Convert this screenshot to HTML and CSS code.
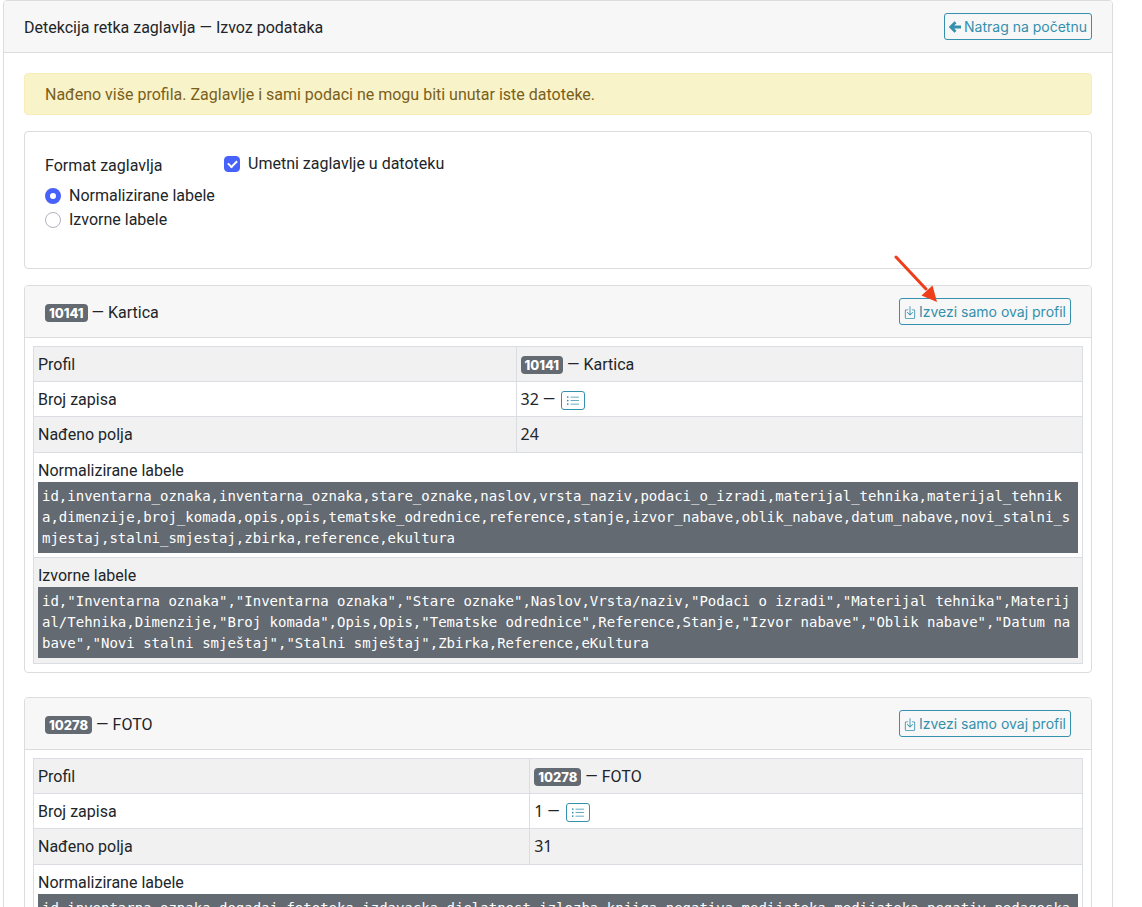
FILE: index.html
```html
<!DOCTYPE html>
<html lang="hr">
<head>
<meta charset="utf-8">
<title>Izvoz podataka</title>
<link rel="stylesheet" href="styles.css">
</head>
<body>
<svg class="symbols" aria-hidden="true">
  <symbol id="list" viewBox="0 0 16 16"><path fill-rule="evenodd" d="M5 11.5a.5.5 0 0 1 .5-.5h9a.5.5 0 0 1 0 1h-9a.5.5 0 0 1-.5-.5zm0-4a.5.5 0 0 1 .5-.5h9a.5.5 0 0 1 0 1h-9a.5.5 0 0 1-.5-.5zm0-4a.5.5 0 0 1 .5-.5h9a.5.5 0 0 1 0 1h-9a.5.5 0 0 1-.5-.5zm-3 1a1 1 0 1 0 0-2 1 1 0 0 0 0 2zm0 4a1 1 0 1 0 0-2 1 1 0 0 0 0 2zm0 4a1 1 0 1 0 0-2 1 1 0 0 0 0 2z"/></symbol>
  <symbol id="download" viewBox="1 0 14 16"><path fill-rule="evenodd" d="M3.5 6a.5.5 0 0 0-.5.5v8a.5.5 0 0 0 .5.5h9a.5.5 0 0 0 .5-.5v-8a.5.5 0 0 0-.5-.5h-2a.5.5 0 0 1 0-1h2A1.500 1.500 0 0 1 14 6.500v8a1.500 1.500 0 0 1-1.500 1.500h-9A1.500 1.500 0 0 1 2 14.500v-8A1.500 1.500 0 0 1 3.500 5h2a.5.5 0 0 1 0 1h-2z"/><path fill-rule="evenodd" d="M7.646 11.854a.5.5 0 0 0 .708 0l3-3a.5.5 0 0 0-.708-.708L8.500 10.293V1.500a.5.5 0 0 0-1 0v8.793L5.354 8.146a.5.5 0 1 0-.708.708l3 3z"/></symbol>
</svg>
<main class="card page">
  <header class="card-header">
    <h1 class="title">Detekcija retka zaglavlja — Izvoz podataka</h1>
    <a class="btn" href="#"><svg class="icon" viewBox="0 0 12 14" aria-hidden="true"><path d="M6.500 2.200 1.700 7l4.800 4.800M2 7h10" fill="none" stroke="currentColor" stroke-width="2.800"/></svg>Natrag na početnu</a>
  </header>
  <div class="page-body">
    <div class="alert" role="alert">Nađeno više profila. Zaglavlje i sami podaci ne mogu biti unutar iste datoteke.</div>
    <form class="card options">
      <fieldset class="group">
        <legend class="legend">Format zaglavlja</legend>
        <label class="choice"><input class="radio" type="radio" name="format" checked>Normalizirane labele</label>
        <label class="choice"><input class="radio" type="radio" name="format">Izvorne labele</label>
      </fieldset>
      <label class="choice"><input class="check" type="checkbox" checked>Umetni zaglavlje u datoteku</label>
    </form>

    <section class="card profile">
      <header class="card-header">
        <h2 class="title"><span class="badge">10141</span> — Kartica</h2>
        <button class="btn" type="button"><svg class="icon" aria-hidden="true"><use href="#download"/></svg>Izvezi samo ovaj profil</button>
        <svg class="pointer" viewBox="0 0 44 48" aria-hidden="true"><path d="M2 2 32 34" stroke="#ee3d1b" stroke-width="3" stroke-linecap="round"/><path d="M43 47 27.500 40.500 38.500 30.500z" fill="#ee3d1b"/></svg>
      </header>
      <div class="profile-body">
        <table class="table">
          <colgroup><col class="first"><col></colgroup>
          <tr><td>Profil</td><td><span class="badge">10141</span> — Kartica</td></tr>
          <tr><td>Broj zapisa</td><td><span class="num">32</span> — <button class="mini" type="button" aria-label="Popis zapisa"><svg class="mini-icon" aria-hidden="true"><use href="#list"/></svg></button></td></tr>
          <tr class="count"><td>Nađeno polja</td><td><span class="num">24</span></td></tr>
          <tr><td colspan="2">Normalizirane labele<pre class="code">id,inventarna_oznaka,inventarna_oznaka,stare_oznake,naslov,vrsta_naziv,podaci_o_izradi,materijal_tehnika,materijal_tehnika,dimenzije,broj_komada,opis,opis,tematske_odrednice,reference,stanje,izvor_nabave,oblik_nabave,datum_nabave,novi_stalni_smjestaj,stalni_smjestaj,zbirka,reference,ekultura</pre></td></tr>
          <tr class="last"><td colspan="2">Izvorne labele<pre class="code">id,"Inventarna oznaka","Inventarna oznaka","Stare oznake",Naslov,Vrsta/naziv,"Podaci o izradi","Materijal tehnika",Materijal/Tehnika,Dimenzije,"Broj komada",Opis,Opis,"Tematske odrednice",Reference,Stanje,"Izvor nabave","Oblik nabave","Datum nabave","Novi stalni smještaj","Stalni smještaj",Zbirka,Reference,eKultura</pre></td></tr>
        </table>
      </div>
    </section>

    <section class="card profile">
      <header class="card-header">
        <h2 class="title"><span class="badge">10278</span> — FOTO</h2>
        <button class="btn" type="button"><svg class="icon" aria-hidden="true"><use href="#download"/></svg>Izvezi samo ovaj profil</button>
      </header>
      <div class="profile-body">
        <table class="table">
          <colgroup><col class="first-wide"><col></colgroup>
          <tr><td>Profil</td><td><span class="badge">10278</span> — FOTO</td></tr>
          <tr><td>Broj zapisa</td><td><span class="num">1</span> — <button class="mini" type="button" aria-label="Popis zapisa"><svg class="mini-icon" aria-hidden="true"><use href="#list"/></svg></button></td></tr>
          <tr class="count"><td>Nađeno polja</td><td><span class="num">31</span></td></tr>
          <tr><td colspan="2">Normalizirane labele<pre class="code">id,inventarna_oznaka,dogadaj,fototeka,izdavacka_djelatnost,izlozba,knjiga_negativa,medijateka,medijateka_negativ,pedagoska</pre></td></tr>
        </table>
      </div>
    </section>
  </div>
</main>
</body>
</html>
```
FILE: styles.css
```css
* { box-sizing: border-box; }
html { height: 100%; overflow: hidden; }
body {
  margin: 0 29px 0 3px;
  height: 100%;
  overflow: hidden;
  background: #fff;
  color: #212529;
  font: 16px/24px Roboto, "Liberation Sans", sans-serif;
}
.symbols { display: none; }
.card { border: 1px solid #dcdcdd; border-radius: 4px; background: #fff; }
.card-header {
  position: relative;
  display: flex;
  align-items: center;
  justify-content: space-between;
  height: 52px;
  padding: 0 20px;
  background: #f7f7f7;
  border-bottom: 1px solid #dcdcdd;
  border-radius: 3px 3px 0 0;
}
.title { margin: 0; padding-top: 2px; font-size: 16px; font-weight: 400; }
.page-body { padding: 20px; }
.btn {
  display: inline-flex;
  align-items: center;
  gap: 3px;
  height: 27px;
  padding: 0 4px;
  border: 1px solid #3490ad;
  border-radius: 3px;
  background: transparent;
  color: #3490ad;
  font: 14px/21px Inter, sans-serif;
  text-decoration: none;
}
.icon { width: 12px; height: 14px; fill: currentColor; }
.alert {
  padding: 9px 20px 7px;
  border: 1px solid #f8edb6;
  border-radius: 4px;
  background: #f9f3ca;
  color: #79601a;
}
.options {
  display: flex;
  gap: 61px;
  align-items: flex-start;
  margin-top: 16px;
  padding: 20px 20px 36px;
}
.group { margin: 0; padding: 0; border: 0; width: 118px; min-width: 0; white-space: nowrap; }
.legend { padding: 2px 0 0; margin-bottom: 6px; }
.choice { display: flex; align-items: center; gap: 8px; }
.radio, .check { appearance: none; flex: none; width: 16px; height: 16px; margin: 0; border: 1px solid #b0b3bd; background: #fff; }
.radio { border-radius: 50%; }
.radio:checked { border: 5px solid #4761fb; }
.check { border-radius: 4px; }
.check:checked { border-color: #4761fb; background: #4761fb; display: grid; place-items: center; }
.check:checked::after { content: ""; width: 7px; height: 4px; border: solid #fff; border-width: 0 0 2px 2px; transform: translateY(-1px) rotate(-45deg); }
.profile { margin-top: 16px; }
.profile + .profile { margin-top: 24px; }
.profile-body { padding: 8px; }
.badge {
  display: inline-block;
  padding: 3px 4px 2px;
  border-radius: 4px;
  background: #636a72;
  color: #fff;
  font: 800 13px/13px Inter, sans-serif;
}
.table { width: 100%; table-layout: fixed; border-collapse: collapse; line-height: 23px; }
.table tr:nth-child(odd) { background: #f1f1f1; }
.table td { height: 35px; padding: 6px 4px 4px; border: 1px solid #dadde1; vertical-align: top; }
.table .count td { height: 36px; }
.table .last td { padding-bottom: 5px; }
.first { width: 46%; }
.first-wide { width: 47.3%; }
.num { font-family: "Noto Sans", sans-serif; line-height: 20px; }
.mini {
  display: inline-flex;
  align-items: center;
  justify-content: center;
  width: 24px;
  height: 19px;
  margin-left: 2px;
  padding: 0;
  border: 1px solid #3490ad;
  border-radius: 3px;
  background: transparent;
  color: #3490ad;
  vertical-align: middle;
}
.mini-icon { width: 14px; height: 14px; fill: currentColor; }
.code {
  margin: 0;
  padding: 4px;
  background: #636a72;
  color: #fff;
  font: 14px/21px "DejaVu Sans Mono", monospace;
  white-space: pre-wrap;
  word-break: break-all;
}
.pointer { position: absolute; right: 153px; top: -31px; width: 44px; height: 48px; fill: none; }
```
